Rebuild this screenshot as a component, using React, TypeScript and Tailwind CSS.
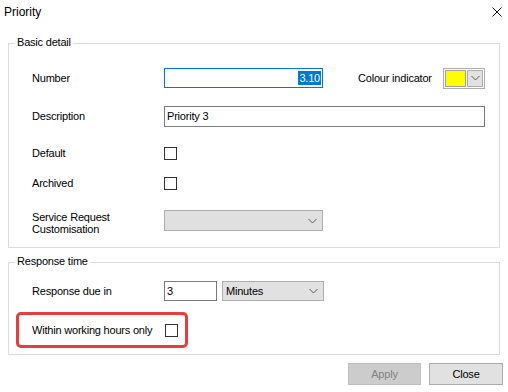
const Chevron = () => (
  <svg width="9" height="6" viewBox="0 0 9 6">
    <path d="M0.5 1 L4.5 5 L8.5 1" fill="none" stroke="#5a5a5a" strokeWidth="1" />
  </svg>
);

const Checkbox = () => <div className="w-[13px] h-[13px] border border-[#333333] bg-white" />;

export default function App() {
  return (
    <div className="w-[508px] h-[392px] bg-white text-black font-['Liberation_Sans',Arial,sans-serif] text-[11px] leading-[13px] tracking-[-0.2px] flex flex-col overflow-hidden">
      <div className="h-[24px] flex items-center justify-between pl-[4px] pr-[6px]">
        <span className="text-[12px] tracking-normal">Priority</span>
        <svg width="10" height="10" viewBox="0 0 10 10">
          <path d="M0.5 0.5 L9.5 9.5 M9.5 0.5 L0.5 9.5" stroke="#111" strokeWidth="1" />
        </svg>
      </div>

      <div className="relative mt-[19px] ml-[8px] w-[492px] h-[205px] border border-[#dcdcdc] flex flex-col pl-[23px]">
        <span className="absolute left-[6px] top-[-8px] px-[2px] bg-white">Basic detail</span>

        <div className="mt-[24px] h-[20px] flex items-center">
          <span className="w-[132px]">Number</span>
          <div className="w-[159px] h-[20px] border border-[#0078d7] flex items-center justify-end pr-[1px]">
            <span className="bg-[#0078d7] text-white leading-[14px] px-[1px]">3.10</span>
          </div>
          <span className="ml-[35px] w-[85px]">Colour indicator</span>
          <div className="w-[42px] h-[21px] border border-[#adadad] flex items-center p-[1px] gap-[1px]">
            <div className="w-[21px] h-[17px] border border-[#a0a0a0] bg-[#ffff00]" />
            <div className="flex-1 h-[17px] border border-[#adadad] bg-[#e1e1e1] flex items-center justify-center">
              <Chevron />
            </div>
          </div>
        </div>

        <div className="mt-[18px] h-[21px] flex items-center">
          <span className="w-[132px]">Description</span>
          <div className="w-[321px] h-[21px] border border-[#7a7a7a] flex items-center pl-[2px]">Priority 3</div>
        </div>

        <div className="mt-[20px] h-[13px] flex items-center">
          <span className="w-[132px]">Default</span>
          <Checkbox />
        </div>

        <div className="mt-[17px] h-[13px] flex items-center">
          <span className="w-[132px]">Archived</span>
          <Checkbox />
        </div>

        <div className="mt-[20px] h-[21px] flex items-start">
          <span className="w-[132px] leading-[12px] mt-[1px]">Service Request<br />Customisation</span>
          <div className="w-[159px] h-[21px] border border-[#adadad] bg-[#e0e0e0] flex items-center justify-end pr-[5px]">
            <Chevron />
          </div>
        </div>
      </div>

      <div className="relative mt-[14px] ml-[8px] w-[492px] h-[93px] border border-[#dcdcdc] flex flex-col">
        <span className="absolute left-[6px] top-[-8px] px-[2px] bg-white">Response time</span>

        <div className="mt-[18px] h-[20px] flex items-center pl-[23px]">
          <span className="w-[132px]">Response due in</span>
          <div className="w-[53px] h-[20px] border border-[#7a7a7a] flex items-center pl-[2px]">3</div>
          <div className="ml-[5px] w-[102px] h-[20px] border border-[#adadad] bg-[#e1e1e1] flex items-center justify-between pl-[3px] pr-[5px]">
            <span>Minutes</span>
            <Chevron />
          </div>
        </div>

        <div className="mt-[11px] ml-[7px] w-[172px] h-[36px] border-[3px] border-[#e53e3e] rounded-[5px] flex items-center pl-[13px]">
          <span className="w-[133px]">Within working hours only</span>
          <Checkbox />
        </div>
      </div>

      <div className="mt-[8px] flex justify-end gap-[8px] pr-[5px]">
        <div className="w-[73px] h-[22px] border border-[#bfbfbf] bg-[#cccccc] text-[#838383] flex items-center justify-center">Apply</div>
        <div className="w-[74px] h-[22px] border border-[#adadad] bg-[#e1e1e1] flex items-center justify-center">Close</div>
      </div>
    </div>
  );
}
